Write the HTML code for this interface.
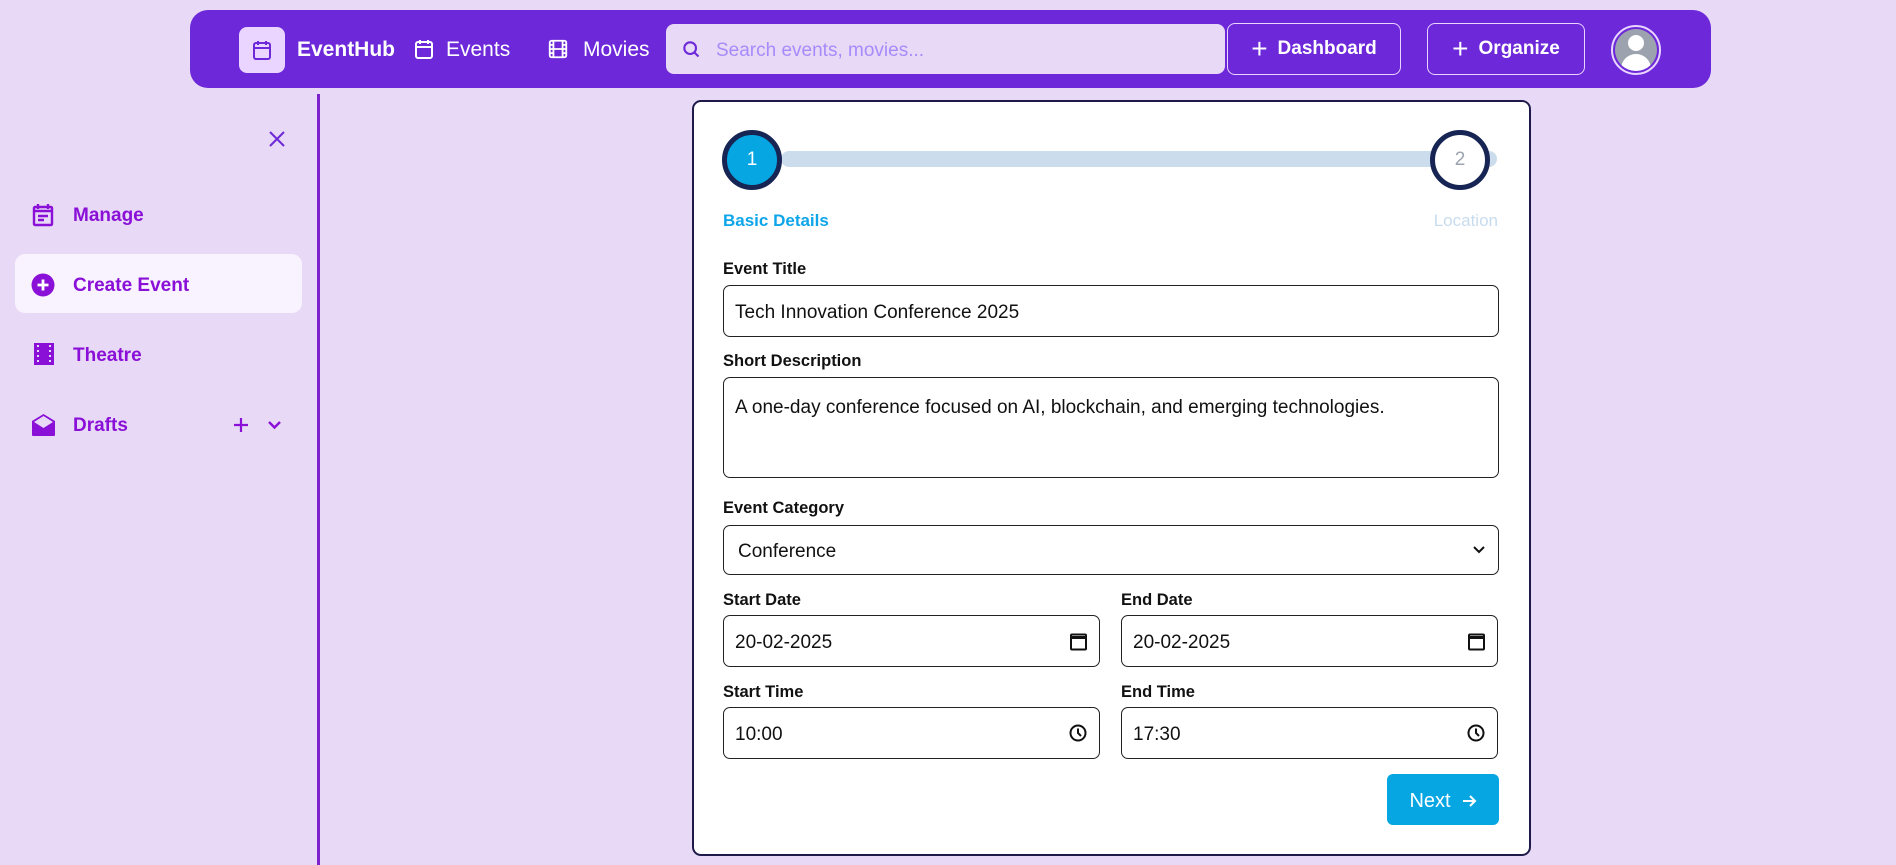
<!DOCTYPE html>
<html><head><meta charset="utf-8"><style>
*{box-sizing:border-box;margin:0;padding:0}
body{width:1896px;height:865px;background:#e8d9f6;font-family:"Liberation Sans",sans-serif;position:relative;overflow:hidden}
.a{position:absolute}
.nav{left:190px;top:10px;width:1521px;height:78px;background:#6d28d9;border-radius:18px}
.wt{color:#fff;font-size:21px}
.btn{border:1.5px solid #e9d5ff;border-radius:8px;color:#fff;font-size:19px;font-weight:600;display:flex;align-items:center;justify-content:center;gap:10px}
.side{color:#8a10d8;font-size:19px;font-weight:700}
.lbl{font-size:16.5px;font-weight:700;color:#111;left:723px}
.inp{border:1.5px solid #222;border-radius:7px;left:723px;width:776px;font-size:19px;color:#111;padding-left:11px;padding-top:4px;display:flex;align-items:center;background:#fff}
.h{width:377px}
.ic{position:absolute;right:12px;top:50%;transform:translateY(-50%)}
</style></head><body>
<div class="a nav"></div>
<div class="a" style="left:239px;top:27px;width:46px;height:46px;background:#e9d5ff;border-radius:8px"></div>
<svg class="a" style="left:250px;top:38px" width="24" height="24" viewBox="0 0 24 24" fill="none" stroke="#6d28d9" stroke-width="2"><rect x="4" y="5" width="16" height="16" rx="2"/><path d="M8 3v4M16 3v4M4 10h16"/></svg>
<div class="a wt" style="left:297px;top:38px;font-weight:700">EventHub</div>
<svg class="a" style="left:412px;top:37px" width="24" height="24" viewBox="0 0 24 24" fill="none" stroke="#fff" stroke-width="2"><rect x="4" y="5" width="16" height="16" rx="2"/><path d="M8 3v4M16 3v4M4 10h16"/></svg>
<div class="a wt" style="left:446px;top:38px">Events</div>
<svg class="a" style="left:547px;top:38px" width="22" height="22" viewBox="0 0 24 24" fill="none" stroke="#fff" stroke-width="2"><rect x="3" y="3" width="18" height="18" rx="2"/><path d="M7 3v18M17 3v18M3 12h18M3 7.5h4M3 16.5h4M17 7.5h4M17 16.5h4"/></svg>
<div class="a wt" style="left:583px;top:38px">Movies</div>
<div class="a" style="left:666px;top:24px;width:559px;height:50px;background:#e8d9f6;border-radius:8px"></div>
<svg class="a" style="left:681px;top:39px" width="20" height="20" viewBox="0 0 24 24" fill="none" stroke="#6d28d9" stroke-width="2.5"><circle cx="11" cy="11" r="7"/><path d="M16 16l5 5"/></svg>
<div class="a" style="left:716px;top:40px;font-size:19px;color:#a78bfa">Search events, movies...</div>
<div class="a btn" style="left:1227px;top:23px;width:174px;height:52px"><span style="font-size:28px;font-weight:300">+</span>Dashboard</div>
<div class="a btn" style="left:1427px;top:23px;width:158px;height:52px"><span style="font-size:28px;font-weight:300">+</span>Organize</div>
<div class="a" style="left:1611px;top:25px;width:50px;height:50px;border-radius:50%;border:2px solid #e9d5ff;background:#6d28d9;padding:2px">
<div style="position:relative;width:42px;height:42px;border-radius:50%;background:#9ca3af;overflow:hidden">
<div class="a" style="left:13px;top:6px;width:16px;height:16px;border-radius:50%;background:#fff"></div>
<div class="a" style="left:6px;top:25px;width:30px;height:22px;border-radius:15px 15px 0 0;background:#fff"></div></div></div>

<div class="a" style="left:317px;top:94px;width:3px;height:771px;background:#7e22ce"></div>
<svg class="a" style="left:268px;top:130px" width="18" height="18" viewBox="0 0 18 18" stroke="#6d28d9" stroke-width="2"><path d="M2 2l14 14M16 2L2 16"/></svg>
<svg class="a" style="left:32px;top:203px" width="22" height="24" viewBox="0 0 22 24" fill="none" stroke="#8a10d8" stroke-width="2.4"><rect x="2" y="4" width="18" height="18" rx="1"/><path d="M6 1v5M16 1v5M2 8h18M6 13h10M6 17h6"/></svg>
<div class="a side" style="left:73px;top:205px">Manage</div>
<div class="a" style="left:15px;top:254px;width:287px;height:59px;background:#f8f3fe;border-radius:10px"></div>
<svg class="a" style="left:31px;top:273px" width="24" height="24" viewBox="0 0 24 24"><circle cx="12" cy="12" r="11.5" fill="#8a10d8"/><path d="M12 6.5v11M6.5 12h11" stroke="#fff" stroke-width="2.8"/></svg>
<div class="a side" style="left:73px;top:275px">Create Event</div>
<svg class="a" style="left:34px;top:343px" width="20" height="22" viewBox="0 0 20 22"><rect x="0" y="0" width="20" height="22" fill="#8a10d8"/><path d="M4 2v2M4 7v2M4 12v2M4 17v2M16 2v2M16 7v2M16 12v2M16 17v2" stroke="#e8d9f6" stroke-width="2"/></svg>
<div class="a side" style="left:73px;top:345px">Theatre</div>
<svg class="a" style="left:31px;top:413px" width="25" height="24" viewBox="0 0 25 24"><path d="M1 8L12.5 1 24 8v14a1 1 0 0 1-1 1H2a1 1 0 0 1-1-1z" fill="#8a10d8"/><path d="M3 9l9.5 6L22 9l-9.5-6z" fill="#e8d9f6"/></svg>
<div class="a side" style="left:73px;top:415px">Drafts</div>
<svg class="a" style="left:232px;top:416px" width="18" height="18" viewBox="0 0 18 18" stroke="#8a10d8" stroke-width="2.2"><path d="M9 2v14M2 9h14"/></svg>
<svg class="a" style="left:267px;top:420px" width="15" height="10" viewBox="0 0 15 10" fill="none" stroke="#8a10d8" stroke-width="2.4"><path d="M2 2l5.5 5.5L13 2"/></svg>

<div class="a" style="left:692px;top:100px;width:839px;height:756px;background:#fff;border:2px solid #1e1b4b;border-radius:9px"></div>
<div class="a" style="left:781px;top:151px;width:716px;height:16px;background:#cbdcec;border-radius:8px"></div>
<div class="a" style="left:722px;top:130px;width:60px;height:60px;border-radius:50%;background:#06a6e3;border:5px solid #172554;color:#fff;font-size:19px;display:flex;align-items:center;justify-content:center">1</div>
<div class="a" style="left:1430px;top:130px;width:60px;height:60px;border-radius:50%;background:#fff;border:5px solid #172554;color:#9ca3af;font-size:19px;display:flex;align-items:center;justify-content:center">2</div>
<div class="a" style="left:723px;top:211px;font-size:17px;font-weight:700;color:#0ea5e9">Basic Details</div>
<div class="a" style="left:1400px;top:211px;width:98px;text-align:right;font-size:17px;color:#c7dcee">Location</div>

<div class="a lbl" style="top:260px">Event Title</div>
<div class="a inp" style="top:285px;height:52px">Tech Innovation Conference 2025</div>
<div class="a lbl" style="top:352px">Short Description</div>
<div class="a inp" style="top:377px;height:101px;align-items:flex-start;padding-top:19px">A one-day conference focused on AI, blockchain, and emerging technologies.</div>
<div class="a lbl" style="top:499px">Event Category</div>
<div class="a inp" style="top:525px;height:50px;padding-left:14px">Conference
<svg class="ic" width="14" height="10" viewBox="0 0 14 10" fill="none" stroke="#111" stroke-width="2"><path d="M2 2l5 5 5-5"/></svg></div>
<div class="a lbl" style="top:591px">Start Date</div>
<div class="a lbl" style="top:591px;left:1121px">End Date</div>
<div class="a inp h" style="top:615px;height:52px">20-02-2025<svg class="ic" width="17" height="19" viewBox="0 0 17 19" fill="none" stroke="#111" stroke-width="2"><rect x="1" y="3" width="15" height="15" rx="1"/><path d="M1 6h15" stroke-width="3"/></svg></div>
<div class="a inp h" style="top:615px;height:52px;left:1121px">20-02-2025<svg class="ic" width="17" height="19" viewBox="0 0 17 19" fill="none" stroke="#111" stroke-width="2"><rect x="1" y="3" width="15" height="15" rx="1"/><path d="M1 6h15" stroke-width="3"/></svg></div>
<div class="a lbl" style="top:683px">Start Time</div>
<div class="a lbl" style="top:683px;left:1121px">End Time</div>
<div class="a inp h" style="top:707px;height:52px">10:00<svg class="ic" width="18" height="18" viewBox="0 0 18 18" fill="none" stroke="#111" stroke-width="2"><circle cx="9" cy="9" r="7.5"/><path d="M9 4.5V9l3 3"/></svg></div>
<div class="a inp h" style="top:707px;height:52px;left:1121px">17:30<svg class="ic" width="18" height="18" viewBox="0 0 18 18" fill="none" stroke="#111" stroke-width="2"><circle cx="9" cy="9" r="7.5"/><path d="M9 4.5V9l3 3"/></svg></div>
<div class="a" style="left:1387px;top:774px;width:112px;height:51px;background:#06a6e3;border-radius:6px;color:#fff;font-size:20px;display:flex;align-items:center;justify-content:center;gap:10px;padding-top:3px">Next<svg width="16" height="16" viewBox="0 0 16 16" fill="none" stroke="#fff" stroke-width="2"><path d="M2 8h12M9 3l5 5-5 5"/></svg></div>
</body></html>
